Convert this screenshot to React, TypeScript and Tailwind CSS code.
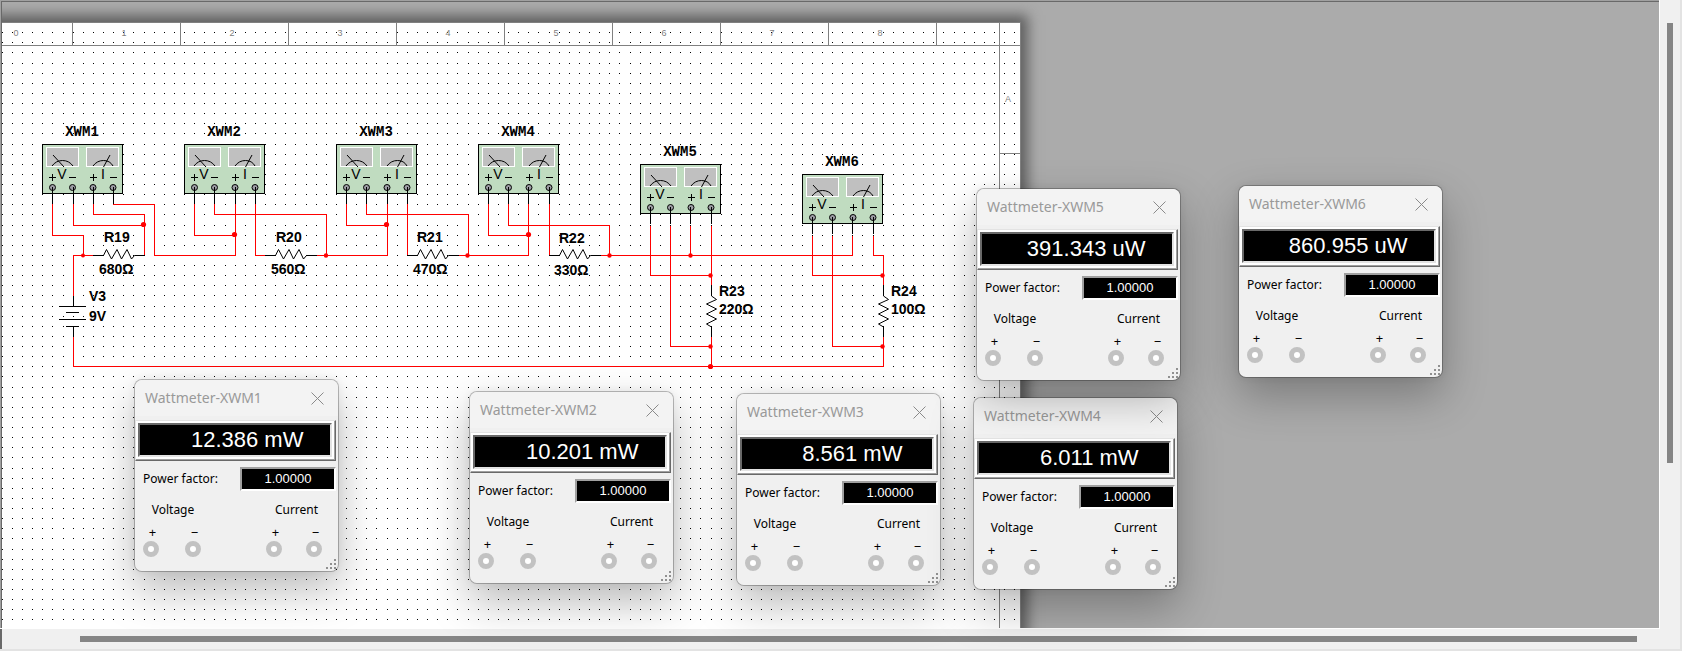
type Point = [number, number];

const SANS = "'Liberation Sans', Arial, sans-serif";
const MONO = "'Liberation Mono', 'Courier New', monospace";

/* ---------- Schematic sheet ---------- */

const PITCH = 10.125;
const ORIGIN = 2.25;

function buildDotPath(columns: number, rows: number) {
  let d = "";
  for (let row = 3; row < rows; row++) {
    const y = Math.floor(ORIGIN + row * PITCH);
    for (let col = 0; col < columns; col++) {
      d += `M${Math.floor(ORIGIN + col * PITCH)} ${y}h1v1h-1z`;
    }
  }
  return d;
}

const DOTS = buildDotPath(101, 62);

function toPoints(points: Point[]) {
  return points.map(([x, y]) => `${x + 0.5},${y + 0.5}`).join(" ");
}

const WIRES: Point[][] = [
  [[52, 203], [52, 235], [83, 235], [83, 255]],
  [[73, 203], [73, 225], [144, 225]],
  [[93, 203], [93, 214], [144, 214], [144, 255]],
  [[113, 203], [113, 204], [154, 204], [154, 255], [235, 255], [235, 203]],
  [[93, 255], [73, 255], [73, 296]],
  [[194, 203], [194, 235], [235, 235]],
  [[214, 203], [214, 214], [326, 214], [326, 255]],
  [[255, 203], [255, 255], [265, 255]],
  [[316, 255], [387, 255], [387, 203]],
  [[346, 203], [346, 225], [387, 225]],
  [[366, 203], [366, 214], [468, 214], [468, 255]],
  [[407, 203], [407, 255]],
  [[457, 255], [528, 255], [528, 203]],
  [[488, 203], [488, 235], [528, 235]],
  [[508, 203], [508, 225], [609, 225], [609, 255]],
  [[549, 203], [549, 255]],
  [[599, 255], [852, 255], [852, 235]],
  [[650, 225], [650, 275], [711, 275]],
  [[670, 225], [670, 346], [711, 346]],
  [[690, 225], [690, 255]],
  [[711, 225], [711, 285]],
  [[711, 336], [711, 366]],
  [[812, 235], [812, 275], [883, 275]],
  [[832, 235], [832, 346], [883, 346]],
  [[873, 235], [873, 255], [883, 255], [883, 285]],
  [[883, 336], [883, 366], [73, 366], [73, 336]],
];

const JUNCTIONS: [number, number, number][] = [
  [143.5, 224, 2.6],
  [83, 255, 2],
  [234.5, 234, 2.6],
  [326, 255, 2.2],
  [386.5, 224, 2.6],
  [467.5, 255, 2.2],
  [528.5, 234, 2.6],
  [609.5, 255, 2.2],
  [690.5, 255, 2.2],
  [710.5, 275, 2.2],
  [710.5, 346, 2.2],
  [710.5, 366, 2.6],
  [882.5, 275, 2.2],
  [882.5, 346, 2.2],
];

interface Meter {
  name: string;
  x: number;
  y: number;
  pins: number[];
}

const METERS: Meter[] = [
  { name: "XWM1", x: 42, y: 144, pins: [52, 73, 93, 113] },
  { name: "XWM2", x: 184, y: 144, pins: [194, 214, 235, 255] },
  { name: "XWM3", x: 336, y: 144, pins: [346, 366, 387, 407] },
  { name: "XWM4", x: 478, y: 144, pins: [488, 508, 528, 549] },
  { name: "XWM5", x: 640, y: 164, pins: [650, 670, 690, 711] },
  { name: "XWM6", x: 802, y: 174, pins: [812, 832, 852, 873] },
];

function MeterSymbol({ meter }: { meter: Meter }) {
  const { x, y, pins, name } = meter;
  return (
    <>
      <g transform={`translate(${x} ${y})`}>
        <text x="40" y="-8" textAnchor="middle" fontFamily={MONO} fontSize="14" fontWeight="bold">
          {name}
        </text>
        <rect x=".5" y=".5" width="80" height="49" fill="#c0dcc0" stroke="#000" />
        <rect x="4.5" y="3.5" width="32" height="19" fill="#c0c0c0" stroke="#fff" />
        <rect x="44.5" y="3.5" width="32" height="19" fill="#c0c0c0" stroke="#fff" />
        <g fill="none" stroke="#000">
          <path d="M10 22Q14 16.5 20.5 16.5T31 22M11 11L22 23" />
          <path d="M51 22Q55 16.5 61.5 16.5T71 22M68 11L61.5 23" />
          <path
            shapeRendering="crispEdges"
            d="M7 33.5h7M10.5 30v7M27 33.5h7M48 33.5h7M51.5 30v7M68 33.5h7"
          />
        </g>
        <text x="20" y="35" textAnchor="middle" fontFamily={SANS} fontSize="14">V</text>
        <text x="61" y="35" textAnchor="middle" fontFamily={SANS} fontSize="14">I</text>
        {[10.5, 30.5, 51, 71].map((cx) => (
          <circle key={cx} cx={cx} cy="43.5" r="3" fill="#9c9ca4" stroke="#000" />
        ))}
      </g>
      <g stroke="#000" shapeRendering="crispEdges">
        {pins.map((pin) => (
          <path key={pin} d={`M${pin + 0.5} ${y + 43}V${y + 60}`} />
        ))}
      </g>
    </>
  );
}

const HORIZONTAL_RESISTORS = [
  { x: 93, name: "R19", value: "680Ω", nameX: 104, valueX: 99, nameY: 242, valueY: 274 },
  { x: 265, name: "R20", value: "560Ω", nameX: 276, valueX: 271, nameY: 242, valueY: 274 },
  { x: 407, name: "R21", value: "470Ω", nameX: 417, valueX: 413, nameY: 242, valueY: 274 },
  { x: 549, name: "R22", value: "330Ω", nameX: 559, valueX: 554, nameY: 243, valueY: 275 },
];

const VERTICAL_RESISTORS = [
  { x: 711, name: "R23", value: "220Ω" },
  { x: 883, name: "R24", value: "100Ω" },
];

function Schematic() {
  return (
    <svg
      className="absolute left-0 top-0 block"
      width="1022"
      height="628"
      role="img"
      aria-label="Circuit schematic with six wattmeters"
    >
      <path d={DOTS} fill="#000" shapeRendering="crispEdges" />

      <g stroke="#808080" fill="none" shapeRendering="crispEdges">
        <path d="M2 22.5H1020.5V628M2 45.5H1020M999.5 23V628M1000 153.5H1020" />
        {[72, 180, 288, 396, 504, 612, 720, 828, 936].map((x) => (
          <path key={x} d={`M${x + 0.5} 23V45`} />
        ))}
      </g>
      <g fill="#808080" fontFamily={SANS} fontSize="9" textAnchor="middle">
        {[0, 1, 2, 3, 4, 5, 6, 7, 8].map((n) => (
          <text key={n} x={16 + n * 108} y="36">{n}</text>
        ))}
        <text x="1008" y="102">A</text>
      </g>

      <g fill="none" stroke="#f00" shapeRendering="crispEdges">
        {WIRES.map((wire) => (
          <polyline key={toPoints(wire)} points={toPoints(wire)} />
        ))}
      </g>

      {METERS.map((meter) => (
        <MeterSymbol key={meter.name} meter={meter} />
      ))}

      <g fontFamily={SANS} fontSize="14" fontWeight="bold">
        {HORIZONTAL_RESISTORS.map((r) => (
          <g key={r.name}>
            <path
              d={`M${r.x} 255.5h10.5l3-6l5 9.500l5.500-9.500l4.500 9.500l5.500-9.500l4.500 9.500l3-3.500h10.500`}
              fill="none"
              stroke="#000"
            />
            <text x={r.nameX} y={r.nameY}>{r.name}</text>
            <text x={r.valueX} y={r.valueY}>{r.value}</text>
          </g>
        ))}
        {VERTICAL_RESISTORS.map((r) => (
          <g key={r.name}>
            <path
              d={`M${r.x + 0.5} 285v11l5 3.500l-10 4.500l10 5l-10 5l10 5l-10 5l5 3v9`}
              fill="none"
              stroke="#000"
            />
            <text x={r.x + 8} y="296">{r.name}</text>
            <text x={r.x + 8} y="314">{r.value}</text>
          </g>
        ))}
        <path
          d="M73.500 296v10M59 306.500h27M66 312.500h13M59 319.500h27M66 326.500h13M73.500 327v10"
          stroke="#000"
          shapeRendering="crispEdges"
        />
        <text x="89" y="301">V3</text>
        <text x="89" y="321">9V</text>
      </g>

      <g fill="#f00">
        {JUNCTIONS.map(([cx, cy, r]) => (
          <circle key={`${cx}-${cy}`} cx={cx} cy={cy + 0.5} r={r} />
        ))}
      </g>
    </svg>
  );
}

/* ---------- Instrument windows ---------- */

interface Instrument {
  name: string;
  power: string;
  place: string;
}

const INSTRUMENTS: Instrument[] = [
  { name: "XWM1", power: "12.386 mW", place: "left-[134px] top-[379px]" },
  { name: "XWM2", power: "10.201 mW", place: "left-[469px] top-[391px]" },
  { name: "XWM3", power: "8.561 mW", place: "left-[736px] top-[393px]" },
  { name: "XWM4", power: "6.011 mW", place: "left-[973px] top-[397px]" },
  { name: "XWM5", power: "391.343 uW", place: "left-[976px] top-[188px]" },
  { name: "XWM6", power: "860.955 uW", place: "left-[1238px] top-[185px]" },
];

/* The display is centred over a fixed field, so short readings are padded on the left. */
const DISPLAY_FIELD = 13;

function Terminal({ sign }: { sign: string }) {
  return (
    <div className="flex w-4 flex-col items-center gap-px">
      <span className="h-4 pl-[3px] text-[13px] leading-4">{sign}</span>
      <span className="size-4 rounded-full border-5 border-[#c2c2c2] bg-white" />
    </div>
  );
}

function Wattmeter({ name, power, place }: Instrument) {
  return (
    <section
      aria-label={`Wattmeter ${name}`}
      className={`absolute ${place} w-[205px] rounded-lg border border-black/25 bg-[#f0f0f0] bg-clip-padding pb-[14px] font-['Noto_Sans',sans-serif] text-xs text-black shadow-[0_18px_44px_rgba(0,0,0,0.28),0_0_8px_rgba(0,0,0,0.06)]`}
    >
      <header className="flex h-9 items-center justify-between rounded-t-lg bg-[#f3f3f3] pl-[10px] pr-[14px]">
        <h2 className="text-sm text-[#999]">Wattmeter-{name}</h2>
        <button type="button" aria-label={`Close ${name}`} className="text-[#8a8a8a]">
          <svg width="13" height="13" viewBox="0 0 13 13" fill="none" stroke="currentColor" className="block">
            <path d="M.5.5l12 12M12.500.5l-12 12" />
          </svg>
        </button>
      </header>
      <div className="mr-[2px] mt-1 border-b border-r border-[#696969] border-l border-l-[#e3e3e3] border-t border-t-[#e3e3e3]">
        <div className="border-r border-b border-[#a0a0a0] bg-white p-[2px]">
          <output className="block h-[34px] whitespace-pre border-2 border-t-[#696969] border-l-[#696969] border-r-[#e3e3e3] border-b-[#e3e3e3] bg-black text-center font-['Liberation_Sans',Arial,sans-serif] text-[22px] leading-[30px] text-white">
            {power.padStart(DISPLAY_FIELD)}
          </output>
        </div>
      </div>
      <div className="mt-[6px] flex items-center justify-between pl-2 pr-[2px]">
        <span>Power factor:</span>
        <output className="h-6 w-24 border-2 border-t-[#a0a0a0] border-l-[#a0a0a0] border-r-white border-b-white bg-black text-center font-['Liberation_Sans',Arial,sans-serif] text-[13px] leading-5 text-white">
          1.00000
        </output>
      </div>
      <div className="mt-[11px] flex justify-between pl-2 pr-4">
        <div className="flex w-[58px] flex-col">
          <h3 className="pl-[2px] text-center leading-4">Voltage</h3>
          <div className="mt-[6px] flex justify-between">
            <Terminal sign="+" />
            <Terminal sign="−" />
          </div>
        </div>
        <div className="flex w-14 flex-col">
          <h3 className="pl-[5px] text-center leading-4">Current</h3>
          <div className="mt-[6px] flex justify-between">
            <Terminal sign="+" />
            <Terminal sign="−" />
          </div>
        </div>
      </div>
      <svg className="absolute bottom-px right-px" width="11" height="11" fill="#909090" aria-hidden="true">
        <path d="M8 0h2v2h-2zM4 4h2v2h-2zM8 4h2v2h-2zM0 8h2v2h-2zM4 8h2v2h-2zM8 8h2v2h-2z" />
      </svg>
    </section>
  );
}

export default function App() {
  return (
    <main className="relative flex h-screen flex-col overflow-hidden border-b-2 border-r-2 border-[#e3e3e3] bg-[#f0f0f0]">
      <div className="flex min-h-0 flex-1">
        <div className="relative min-w-0 flex-1 overflow-hidden border-b border-r border-white bg-[#ababab]">
          <div className="absolute -left-8 top-[22px] h-[700px] w-[1053px] bg-white shadow-[0_0_12px_7px_#606060]" />
          <Schematic />
          <div className="absolute inset-0 border-l border-t border-[#a0a0a0]">
            <div className="h-full border-l border-t border-[#696969]" />
          </div>
        </div>
        <div className="flex w-5 flex-col items-center pt-[23px]">
          <div className="h-[440px] w-[6px] bg-[#858585]" />
        </div>
      </div>
      <div className="flex h-5 items-center border-l-2 border-[#696969] pl-[78px] pr-[43px]">
        <div className="h-[6px] flex-1 bg-[#858585]" />
      </div>
      {INSTRUMENTS.map((instrument) => (
        <Wattmeter key={instrument.name} {...instrument} />
      ))}
    </main>
  );
}
